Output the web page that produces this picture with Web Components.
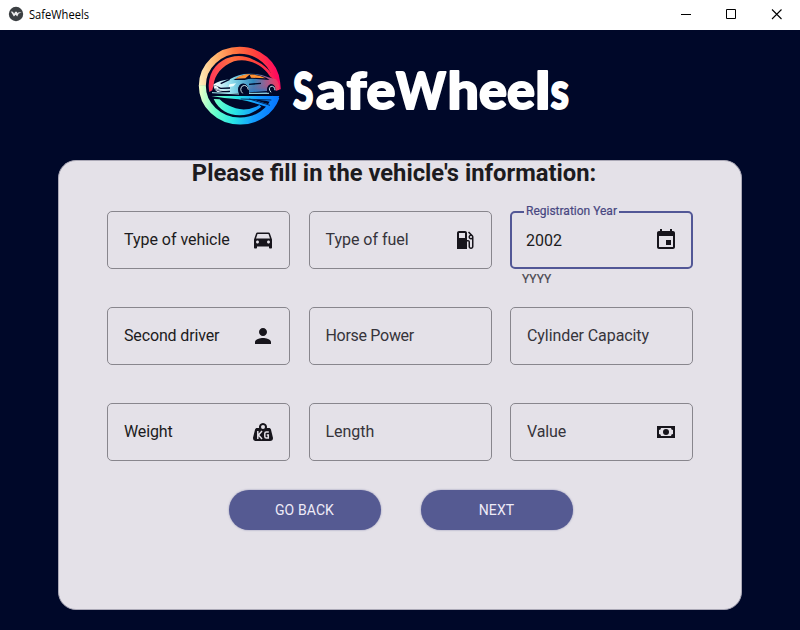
<!DOCTYPE html>
<html lang="en"><head><meta charset="utf-8"><title>SafeWheels</title>
<style>html,body{margin:0;height:100%;overflow:hidden;background:#000829}</style></head>
<body><safe-wheels-app></safe-wheels-app>
<script>
const define=(name,html)=>customElements.define(name,class extends HTMLElement{
  constructor(){super();const t=document.createElement('template');t.innerHTML=html;
    this.attachShadow({mode:'open'}).append(t.content.cloneNode(true));}
});

define('title-bar',`<style>
:host{display:flex;height:30px;background:#fff;color:#000;align-items:center;padding:0 17.500px 2px 8px;box-sizing:border-box;font:12px "Open Sans","Noto Sans",sans-serif}
.name{margin-left:5px;flex:1;padding-top:2px}
svg{display:block}.controls{display:flex;gap:34px;margin-right:.5px}
</style>
<svg width="16" height="16" viewBox="0 0 16 16"><circle cx="8" cy="8" r="7.2" fill="#3c4043"/><path d="M2.800 5.600l2.100.1 1.200 2 1.100-2 1.600.1.8 1.500 1.100-1.100 3 .2-3 1.100-1.500 3-1.500-1.800-1.800 1.800z" fill="#eee"/></svg>
<span class="name"><svg width="62" height="16" style="overflow:visible"><text x="0" y="12" textLength="60" lengthAdjust="spacingAndGlyphs">SafeWheels</text></svg></span>
<span class="controls" aria-hidden="true">
<svg width="11" height="11"><path d="M0 5.500h10" stroke="#000"/></svg>
<svg width="11" height="11"><path d="M.5.5h9v9h-9z" fill="none" stroke="#000"/></svg>
<svg width="11" height="11"><path d="M1 .5l9.500 9.500M10.500.5l-9.500 9.500" fill="none" stroke="#000" stroke-width="1.100"/></svg>
</span>`);

define('brand-logo',`<style>
:host{display:flex;padding:8px 0 0 190px;height:95px}svg{display:block;overflow:visible}
text{font:900 51px Lato,"Open Sans",sans-serif;fill:#fff;stroke:#fff;stroke-width:1.800;stroke-linejoin:round}
</style>
<svg width="100" height="95" viewBox="0 0 300 285">
<defs>
<linearGradient id="warm" gradientUnits="userSpaceOnUse" x1="30" y1="150" x2="265" y2="120"><stop offset="0" stop-color="#fff0c0"/><stop offset=".25" stop-color="#ffb56e"/><stop offset=".5" stop-color="#ff7540"/><stop offset=".75" stop-color="#ff423c"/><stop offset="1" stop-color="#ff0860"/></linearGradient>
<linearGradient id="cool" gradientUnits="userSpaceOnUse" x1="28" y1="150" x2="260" y2="190"><stop offset="0" stop-color="#f5ffc8"/><stop offset=".25" stop-color="#68ffcb"/><stop offset=".5" stop-color="#28e4e5"/><stop offset=".75" stop-color="#139cff"/><stop offset="1" stop-color="#0878ff"/></linearGradient>
<linearGradient id="inner" gradientUnits="userSpaceOnUse" x1="60" y1="130" x2="260" y2="110"><stop stop-color="#ff3658"/><stop offset=".35" stop-color="#ff7040"/><stop offset=".65" stop-color="#ff4938"/><stop offset="1" stop-color="#ff125b"/></linearGradient>
<linearGradient id="body" gradientUnits="userSpaceOnUse" x1="75" y1="150" x2="268" y2="145"><stop stop-color="#f1ffff"/><stop offset=".28" stop-color="#86d8e9"/><stop offset=".6" stop-color="#3188bd"/><stop offset=".8" stop-color="#a05d8e"/><stop offset="1" stop-color="#ff315a"/></linearGradient>
<linearGradient id="deep" x1="0" x2="0" y1="0" y2="1"><stop stop-color="#b34e77" stop-opacity="0"/><stop offset="1" stop-color="#1682d2"/></linearGradient>
</defs>
<g fill="none" stroke-width="21">
<path d="M37 143A112 106 0 0 1 149 37A112 106 0 0 1 260 134L262 155" stroke="url(#warm)"/>
<path d="M37 142A112 106 0 0 0 149 249A112 106 0 0 0 258 177" stroke="url(#cool)"/>
</g>
<path d="M58 162A91 92 0 0 1 62 110C84 55 148 41 190 65C226 79 245 104 256 125L242 118C217 77 170 58 132 70C95 83 74 113 71 139L67 157Z" fill="url(#inner)"/>
<path d="M71 183C91 226 133 239 177 228Q200 219 214 206L208 201Q173 221 137 211Q105 201 89 184Z" fill="url(#cool)"/>
<path d="M64 174H268Q264 188 256 197Q228 185 187 184L244 202L240 210Q190 192 145 184Q102 181 64 174Z" fill="url(#cool)"/>
<path d="M152 183L244 186M178 183L240 202" stroke="#00285f" stroke-width="3"/>
<path d="M71 139Q88 127 119 124Q147 106 181 107Q213 107 235 118L258 124Q270 137 268 155L257 159Q257 139 243 139Q228 144 232 164L177 167Q178 139 159 137Q139 143 147 165L118 166L82 162Q69 153 71 139Z" fill="url(#body)"/>
<path d="M130 126Q157 108 189 108Q222 112 239 126L209 124Q180 120 164 126Z" fill="#00092a"/>
<path d="M136 122Q158 108 181 108L166 121ZM179 110Q207 108 227 121L183 119Z" fill="#ff9133"/>
<path d="M178 141Q205 143 234 137L229 164H179Z" fill="url(#deep)"/>
<g fill="none" stroke="#00092a" stroke-width="4"><path d="M73 143L92 151L120 150M73 151Q89 163 120 160M119 124L92 137M177 139L213 136M179 165L232 161"/></g>
<path d="M147 168Q140 146 153 138Q174 131 178 166ZM233 166Q228 145 241 139Q258 136 257 163Z" fill="#00092a"/>
<path d="M118 139L138 136L130 145L116 147ZM73 141L86 148L82 151L73 147Z" fill="#efffff"/>
<g fill="none" stroke="#cfe7ed" stroke-width="3"><path d="M158 166Q147 155 157 144Q171 138 175 155M243 163Q233 151 243 145Q254 143 255 157M73 151Q94 163 121 154"/></g>
<path d="M66 164L147 168M177 166L237 166" stroke="#a5eff4" stroke-width="3"/>
</svg>
<svg width="280" height="95"><text y="71" lengthAdjust="spacingAndGlyphs"><tspan x="3" textLength="20.500" lengthAdjust="spacingAndGlyphs">S</tspan><tspan x="26" textLength="30" lengthAdjust="spacingAndGlyphs">a</tspan><tspan x="56.500" textLength="20" lengthAdjust="spacingAndGlyphs">f</tspan><tspan x="76.500" textLength="29" lengthAdjust="spacingAndGlyphs">e</tspan><tspan x="106" textLength="50" lengthAdjust="spacingAndGlyphs">W</tspan><tspan x="157.500" textLength="31.500" lengthAdjust="spacingAndGlyphs">h</tspan><tspan x="189" textLength="28" lengthAdjust="spacingAndGlyphs">e</tspan><tspan x="217" textLength="28" lengthAdjust="spacingAndGlyphs">e</tspan><tspan x="245" textLength="15.500" lengthAdjust="spacingAndGlyphs">l</tspan><tspan x="260.500" textLength="18.500" lengthAdjust="spacingAndGlyphs">s</tspan></text></svg>`);

define('form-field',`<style>
:host{display:flex;position:relative;height:58px;box-sizing:border-box;border:1px solid #88868d;border-radius:5px;padding:0 16px;align-items:center;justify-content:space-between;font:16px Roboto,sans-serif;color:#1c1b20;line-height:20px}
.label{white-space:nowrap;letter-spacing:var(--tracking,-.03px)}
:host([active]){border:2px solid #525796;padding:0 15px 0 14px;border-radius:5px}
:host([active]) .label{padding-top:2px}
:host([muted]) .label{color:#36343b}
.caption,.hint{position:absolute;white-space:nowrap;font-size:12px;line-height:18px}
.caption{top:-11px;left:12px;color:#484781;background:#e4e1e8;-webkit-text-stroke:.2px #484781}
.caption ::slotted(*){padding:0 2px}
.hint{left:10px;top:57px;color:#49474f;-webkit-text-stroke:.2px #49474f}
::slotted(svg){display:block;width:24px;height:24px;margin-right:-2px;fill:#17151c}
</style><span class="caption"><slot name="caption"></slot></span><span class="label"><slot></slot></span><slot name="icon"></slot><span class="hint"><slot name="hint"></slot></span>`);

define('pill-button',`<style>
:host{display:flex;width:152px;height:40px;border-radius:20px;background:#555a92;align-items:center;justify-content:center;color:#eeebf7;font:14px Roboto,sans-serif;letter-spacing:.1px;box-shadow:0 0 2px #555a92aa}
</style><slot></slot>`);

define('form-card',`<style>
:host{display:block;margin:27px 58px 0;height:450px;box-sizing:border-box;border:1px solid #aaa8b6;border-radius:18px;background:#e4e1e8;padding:0 48px}
h1{margin:0 0 0 -12px;height:50px;font:700 23.750px/24px Roboto,sans-serif;text-align:center;color:#1c1b20}
.grid{display:grid;grid-template-columns:repeat(3,183px);justify-content:space-between;row-gap:38px}
.actions{display:flex;justify-content:center;gap:40px;margin:29px 0 0 1px}
</style><h1><slot name="heading"></slot></h1><div class="grid"><slot></slot></div><div class="actions"><slot name="action"></slot></div>`);

define('safe-wheels-app',`<style>:host{display:block;height:630px;background:#000829}.tight{--tracking:-.15px}.tighter{--tracking:-.3px}.snug{--tracking:-.08px}</style>
<title-bar></title-bar><brand-logo></brand-logo>
<form-card><span slot="heading">Please fill in the vehicle's information:</span>
<form-field>Type of vehicle<svg slot="icon" viewBox="0 0 24 24"><path transform="translate(0 -.5)" d="M18.920 6.010C18.720 5.420 18.160 5 17.500 5h-11c-.66 0-1.210.42-1.420 1.010L3 12v8c0 .55.45 1 1 1h1c.55 0 1-.45 1-1v-1h12v1c0 .55.45 1 1 1h1c.55 0 1-.45 1-1v-8l-2.080-5.990zM6.500 16c-.83 0-1.500-.67-1.500-1.500S5.670 13 6.500 13s1.500.67 1.500 1.500S7.330 16 6.500 16zm11 0c-.83 0-1.500-.67-1.500-1.500s.67-1.500 1.500-1.500 1.500.67 1.500 1.500-.67 1.500-1.500 1.500zM5 11l1.500-4.500h11L19 11H5z"/></svg></form-field>
<form-field muted>Type of fuel<svg slot="icon" viewBox="0 0 24 24"><path d="M19.770 7.230l.01-.01-3.720-3.720L15 4.560l2.110 2.110c-.94.36-1.610 1.260-1.610 2.330 0 1.380 1.120 2.500 2.500 2.500.36 0 .69-.08 1-.21v7.210c0 .55-.45 1-1 1s-1-.45-1-1V14c0-1.100-.9-2-2-2h-1V5c0-1.100-.9-2-2-2H6c-1.100 0-2 .9-2 2v16h10v-7.500h1.500v5c0 1.380 1.120 2.500 2.500 2.500s2.500-1.120 2.500-2.500V9c0-.69-.28-1.320-.73-1.770zM12 10H6V5h6v5zm6 0c-.55 0-1-.45-1-1s.45-1 1-1 1 .45 1 1-.45 1-1 1z"/></svg></form-field>
<form-field active><span slot="caption">Registration Year</span>2002<span slot="hint">YYYY</span><svg slot="icon" viewBox="0 0 24 24"><path d="M19 3h-1V1h-2v2H8V1H6v2H5c-1.110 0-2 .9-2 2v14c0 1.100.89 2 2 2h14c1.100 0 2-.9 2-2V5c0-1.100-.9-2-2-2zm0 16H5V8h14v11zm-7-7h5v5h-5z"/></svg></form-field>
<form-field class="tight">Second driver<svg slot="icon" viewBox="0 0 24 24"><path d="M12 12c2.210 0 4-1.790 4-4s-1.790-4-4-4-4 1.790-4 4 1.790 4 4 4zm0 2c-2.670 0-8 1.340-8 4v2h16v-2c0-2.660-5.330-4-8-4z"/></svg></form-field>
<form-field muted class="tighter">Horse Power</form-field>
<form-field muted class="snug">Cylinder Capacity</form-field>
<form-field class="tight">Weight<svg slot="icon" viewBox="0 0 24 24"><path fill-rule="evenodd" d="M12 3a4 4 0 0 1 3.870 5H18c.950 0 1.750.670 1.950 1.560C21.960 17.570 22 17.780 22 18a3 3 0 0 1-3 3H5a3 3 0 0 1-3-3c0-.22.04-.43 2.050-8.440C4.250 8.670 5.050 8 6 8h2.130A4 4 0 0 1 12 3zm0 2a2 2 0 0 0 0 4 2 2 0 0 0 0-4z"/><path fill="none" stroke="#e4e1e8" stroke-width="1.500" d="M6.800 11v8M11 11l-3.500 4 3.500 4M17.800 12h-2.500q-1.500 0-1.500 1.500v3q0 1.500 1.500 1.500h2v-3h-1.500"/></svg></form-field>
<form-field muted>Length</form-field>
<form-field muted class="tight">Value<svg slot="icon" viewBox="0 0 24 24"><path fill-rule="evenodd" d="M3 6h18v12H3zm4 2a2 2 0 0 1-2 2v4a2 2 0 0 1 2 2h10a2 2 0 0 1 2-2v-4a2 2 0 0 1-2-2z"/><circle cx="12" cy="12" r="3"/></svg></form-field>
<pill-button slot="action">GO BACK</pill-button><pill-button slot="action">NEXT</pill-button>
</form-card>`);
</script></body></html>
